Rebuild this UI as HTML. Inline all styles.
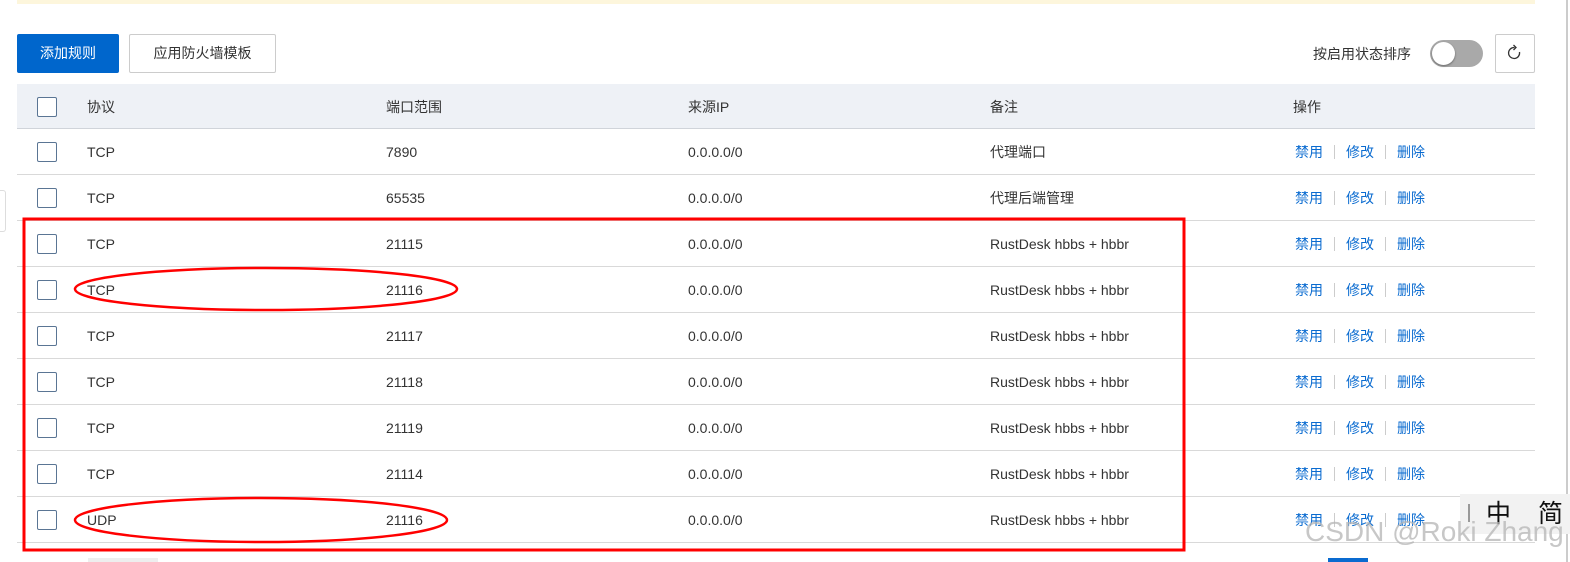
<!DOCTYPE html>
<html><head><meta charset="utf-8"><style>
*{margin:0;padding:0;box-sizing:border-box}
body{width:1570px;height:562px;overflow:hidden;background:#fff;font-family:"Liberation Sans","Noto Sans CJK SC",sans-serif;font-size:14px;color:#333;position:relative}
.a{position:absolute}
.cb{position:absolute;left:37px;width:20px;height:20px;border:1px solid #5a7594;border-radius:2px;background:#fff}
.row{position:absolute;left:17px;width:1518px;height:46px;border-bottom:1px solid #d9d9d9}
.t{position:absolute;top:13px;white-space:nowrap;line-height:20px}
.op{color:#0a6bd0}
.sep{display:inline-block;width:1px;height:14px;background:#ccc;margin:0 11px;vertical-align:-2px}
</style></head><body>
<div class="a" style="left:17px;top:0;width:1518px;height:4px;background:#fdf6dc"></div>
<div class="a" style="left:17px;top:34px;width:102px;height:39px;background:#0066cc;border-radius:2px;color:#fff;text-align:center;line-height:39px">添加规则</div>
<div class="a" style="left:129px;top:34px;width:147px;height:39px;border:1px solid #ccc;border-radius:2px;text-align:center;line-height:37px">应用防火墙模板</div>
<div class="a" style="left:1313px;top:45px;line-height:18px">按启用状态排序</div>
<div class="a" style="left:1430px;top:40px;width:53px;height:27px;background:#a9a9a9;border-radius:14px"><div style="position:absolute;left:2px;top:2px;width:23px;height:23px;border-radius:50%;background:#fff;box-shadow:0 1px 2px rgba(0,0,0,.4)"></div></div>
<div class="a" style="left:1495px;top:34px;width:40px;height:39px;border:1px solid #ccc;border-radius:2px">
<svg width="40" height="39" style="position:absolute;left:-1px;top:-1px"><path d="M24.5 18 A5.5 5.5 0 1 1 19.5 13.5" fill="none" stroke="#333" stroke-width="1.3"/><path d="M18.5 11 L21 13.5 L18.5 16" fill="none" stroke="#333" stroke-width="1.3"/></svg></div>
<div class="a" style="left:0;top:190px;width:6px;height:42px;border:1px solid #ddd;border-left:none;border-radius:0 3px 3px 0"></div>
<div class="a" style="left:17px;top:84px;width:1518px;height:45px;background:#eef1f6;border-bottom:1px solid #d0d4da">
<div class="cb" style="left:20px;top:13px"></div>
<span class="t" style="left:70px">协议</span><span class="t" style="left:369px">端口范围</span><span class="t" style="left:671px">来源IP</span><span class="t" style="left:973px">备注</span><span class="t" style="left:1276px">操作</span></div>
<div id="rows"></div>
<script>
var d=[["TCP","7890","代理端口"],["TCP","65535","代理后端管理"],["TCP","21115","RustDesk hbbs + hbbr"],["TCP","21116","RustDesk hbbs + hbbr"],["TCP","21117","RustDesk hbbs + hbbr"],["TCP","21118","RustDesk hbbs + hbbr"],["TCP","21119","RustDesk hbbs + hbbr"],["TCP","21114","RustDesk hbbs + hbbr"],["UDP","21116","RustDesk hbbs + hbbr"]];
var h="";d.forEach(function(r,i){h+='<div class="row" style="top:'+(129+i*46)+'px"><div class="cb" style="left:20px;top:13px"></div><span class="t" style="left:70px">'+r[0]+'</span><span class="t" style="left:369px">'+r[1]+'</span><span class="t" style="left:671px">0.0.0.0/0</span><span class="t" style="left:973px">'+r[2]+'</span><span class="t op" style="left:1278px">禁用<span class="sep"></span>修改<span class="sep"></span>删除</span></div>'});
document.getElementById("rows").innerHTML=h;
</script>
<div class="a" style="left:88px;top:558px;width:70px;height:4px;background:#eee"></div>
<div class="a" style="left:1328px;top:558px;width:40px;height:4px;background:#0a6bd0"></div>
<div class="a" style="left:1566px;top:0;width:2px;height:562px;background:#ccc"></div>
<svg class="a" style="left:0;top:0" width="1570" height="562">
<rect x="24" y="219" width="1160" height="331" fill="none" stroke="#f00" stroke-width="3"/>
<ellipse cx="266" cy="289" rx="191" ry="21" fill="none" stroke="#f00" stroke-width="2.5"/>
<ellipse cx="261" cy="520" rx="186" ry="22" fill="none" stroke="#f00" stroke-width="2.5"/>
</svg>
<div class="a" style="left:1460px;top:494px;width:110px;height:40px;background:#f2f2f2;font-size:25px;color:#111;line-height:40px;padding-left:26px;letter-spacing:10px;white-space:nowrap;overflow:hidden">中 简 C</div>
<div class="a" style="left:1468px;top:504px;width:2px;height:18px;background:#999"></div>
<div class="a" style="left:1305px;top:516px;font-size:28px;color:rgba(180,180,180,.75);white-space:nowrap;line-height:32px">CSDN @Roki Zhang</div>
</body></html>
